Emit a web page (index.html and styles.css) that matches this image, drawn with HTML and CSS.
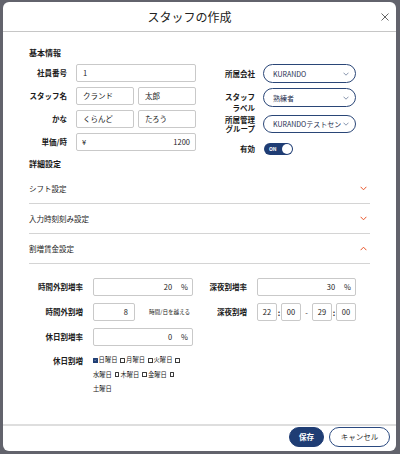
FILE: index.html
```html
<!DOCTYPE html>
<html lang="ja">
<head>
<meta charset="utf-8">
<title>スタッフの作成</title>
<link rel="stylesheet" href="styles.css">
</head>
<body>
<div class="modal">
  <header class="modal-header">
    <h1 class="modal-title">スタッフの作成</h1>
    <button class="close" aria-label="close"><svg width="8" height="8" viewBox="0 0 8 8"><path d="M0.5 0.5L7.5 7.5M7.5 0.5L0.5 7.5" stroke="#555" stroke-width="0.9" fill="none"/></svg></button>
  </header>
  <main class="modal-body">
    <h2 class="section-title first">基本情報</h2>
    <div class="basic">
      <div class="basic-left">
        <div class="lbl">社員番号</div>
        <div class="field"><div class="inp">1</div></div>
        <div class="lbl">スタッフ名</div>
        <div class="field pair"><div class="inp">クランド</div><div class="inp">太郎</div></div>
        <div class="lbl">かな</div>
        <div class="field pair"><div class="inp">くらんど</div><div class="inp">たろう</div></div>
        <div class="lbl">単価/時</div>
        <div class="field"><div class="inp money"><span>¥</span><span>1200</span></div></div>
      </div>
      <div class="basic-right">
        <div class="rrow r1">
          <div class="rlbl">所属会社</div>
          <div class="select"><span class="sel-text">KURANDO</span><svg class="sel-chev" width="6" height="4" viewBox="0 0 6 4"><path d="M0.5 0.7L3 3.2L5.5 0.7" stroke="#6a7a98" stroke-width="0.8" fill="none"/></svg></div>
        </div>
        <div class="rrow r2">
          <div class="rlbl two">スタッフ<br>ラベル</div>
          <div class="select"><span class="sel-text">熟練者</span><svg class="sel-chev" width="6" height="4" viewBox="0 0 6 4"><path d="M0.5 0.7L3 3.2L5.5 0.7" stroke="#6a7a98" stroke-width="0.8" fill="none"/></svg></div>
        </div>
        <div class="rrow r3">
          <div class="rlbl tight">所属管理<br>グループ</div>
          <div class="select"><span class="sel-text">KURANDOテストセンター</span><svg class="sel-chev" width="6" height="4" viewBox="0 0 6 4"><path d="M0.5 0.7L3 3.2L5.5 0.7" stroke="#6a7a98" stroke-width="0.8" fill="none"/></svg></div>
        </div>
        <div class="rrow r4">
          <div class="rlbl">有効</div>
          <div class="toggle"><span class="toggle-text">ON</span><span class="knob"></span></div>
        </div>
      </div>
    </div>

    <h2 class="section-title detail">詳細設定</h2>
    <div class="acc first-acc"><span>シフト設定</span><svg width="7" height="5" viewBox="0 0 7 5"><path d="M0.6 0.8L3.5 3.8L6.4 0.8" stroke="#e8552a" stroke-width="1" fill="none"/></svg></div>
    <div class="acc"><span>入力時刻刻み設定</span><svg width="7" height="5" viewBox="0 0 7 5"><path d="M0.6 0.8L3.5 3.8L6.4 0.8" stroke="#e8552a" stroke-width="1" fill="none"/></svg></div>
    <div class="acc"><span>割増賃金設定</span><svg width="7" height="5" viewBox="0 0 7 5"><path d="M0.6 4.2L3.5 1.2L6.4 4.2" stroke="#e8552a" stroke-width="1" fill="none"/></svg></div>

    <div class="premium">
      <div class="prem-left">
        <div class="plbl">時間外割増率</div>
        <div class="inp unit"><span>20</span><span class="pct">%</span></div>
        <div class="plbl">時間外割増</div>
        <div class="hours"><div class="inp short">8</div><span class="note">時間/日を越える</span></div>
        <div class="plbl">休日割増率</div>
        <div class="inp unit"><span>0</span><span class="pct">%</span></div>
        <div class="plbl top">休日割増</div>
        <div class="days">
          <div class="day-line"><span class="cb checked"><svg width="5" height="5" viewBox="0 0 5 5"><path d="M1 2.6L2.1 3.6L4 1.2" stroke="#fff" stroke-width="0.8" fill="none"/></svg></span><span class="dname">日曜日</span><span class="cb"></span><span class="dname">月曜日</span><span class="cb"></span><span class="dname">火曜日</span><span class="cb"></span></div>
          <div class="day-line"><span class="dname">水曜日</span><span class="cb"></span><span class="dname">木曜日</span><span class="cb"></span><span class="dname">金曜日</span><span class="cb"></span></div>
          <div class="day-line"><span class="dname">土曜日</span></div>
        </div>
      </div>
      <div class="prem-right">
        <div class="plbl">深夜割増率</div>
        <div class="inp unit"><span>30</span><span class="pct">%</span></div>
        <div class="plbl">深夜割増</div>
        <div class="times">
          <div class="inp tbox">22</div><span class="tsep">:</span><div class="inp tbox">00</div><span class="tdash">-</span><div class="inp tbox">29</div><span class="tsep">:</span><div class="inp tbox">00</div>
        </div>
      </div>
    </div>
  </main>
  <footer class="modal-footer">
    <button class="btn primary">保存</button>
    <button class="btn outline">キャンセル</button>
  </footer>
</div>
</body>
</html>
```

FILE: styles.css
```css
* { box-sizing: border-box; }

body {
  margin: 0;
  background: #62636c;
  font-family: "Noto Sans CJK JP", "Noto Sans", sans-serif;
  color: #1e1e1e;
}

.modal {
  margin: 2px 0 0 3px;
  width: 393px;
  height: 449px;
  background: #fff;
  border-radius: 6px;
  display: flex;
  flex-direction: column;
  overflow: hidden;
}

.modal-header {
  height: 30px;
  border-bottom: 1px solid #c6c6c6;
  display: flex;
  align-items: center;
  flex-shrink: 0;
}

.modal-title {
  flex: 1;
  margin: 0;
  text-align: center;
  font-size: 12px;
  font-weight: 400;
  line-height: 16px;
  color: #222;
}

.close {
  width: 17px;
  height: 17px;
  margin-right: 3px;
  padding: 0;
  border: 0;
  background: none;
  display: flex;
  align-items: center;
  justify-content: center;
}

.modal-body {
  flex: 1;
  padding: 0 26px;
}

.section-title {
  margin: 0;
  font-size: 8px;
  font-weight: 700;
  line-height: 12px;
  color: #1a1a1a;
}
.section-title.first { margin-top: 15px; }
.section-title.detail { margin-top: 3px; }

.basic {
  display: flex;
  margin-top: 5px;
  margin-left: -2px;
}

.basic-left {
  display: grid;
  grid-template-columns: 40px 120px;
  grid-auto-rows: 18px;
  column-gap: 9px;
  row-gap: 5px;
}

.lbl {
  font-size: 7.5px;
  font-weight: 700;
  text-align: right;
  line-height: 18px;
  white-space: nowrap;
  color: #1a1a1a;
}

.field { display: flex; }
.field.pair { gap: 4px; }
.field .inp { flex: 1; }

.inp {
  height: 18px;
  border: 1px solid #c9c9c9;
  border-radius: 2px;
  padding: 0 6px;
  font-size: 7.5px;
  line-height: 16px;
  color: #222;
  background: #fff;
}
.inp.money {
  display: flex;
  justify-content: space-between;
  padding: 0 5px 0 5px;
}

.basic-right {
  margin-left: 29px;
  display: flex;
  flex-direction: column;
}

.rrow {
  display: flex;
  align-items: center;
  gap: 8px;
}
.rrow.r1 { height: 19px; }
.rrow.r2 { margin-top: 5px; align-items: flex-start; height: 25px; }
.rrow.r3 { margin-top: 2px; height: 18px; }
.rrow.r4 { margin-top: 10px; height: 12px; }

.rlbl {
  width: 30px;
  text-align: right;
  font-size: 7.5px;
  font-weight: 700;
  white-space: nowrap;
  line-height: 12px;
  color: #1a1a1a;
}
.rlbl.two { line-height: 11px; padding-top: 3px; }
.rlbl.tight { line-height: 9.5px; }

.select {
  width: 93px;
  height: 19px;
  border: 1px solid #2a4677;
  border-radius: 10px;
  display: flex;
  align-items: center;
  padding: 0 6px 0 9px;
  gap: 2px;
}
.rrow.r3 .select { height: 18px; }
.sel-text {
  flex: 1;
  font-size: 7px;
  white-space: nowrap;
  overflow: hidden;
  color: #1f2f4f;
}
.sel-chev { flex-shrink: 0; }

.toggle {
  width: 29px;
  height: 12px;
  margin-left: 1px;
  border-radius: 6px;
  background: #1f3d74;
  display: flex;
  align-items: center;
  justify-content: space-between;
  padding: 0 1px 0 5px;
}
.toggle-text {
  font-size: 5px;
  font-weight: 700;
  color: #fff;
  line-height: 6px;
}
.knob {
  width: 10px;
  height: 10px;
  border-radius: 50%;
  background: #fff;
}

.acc {
  height: 30px;
  border-bottom: 1px solid #d4d4d4;
  display: flex;
  align-items: center;
  justify-content: space-between;
  padding-right: 3px;
  font-size: 7.5px;
  color: #1e1e1e;
}
.acc.first-acc { margin-top: 4px; }

.premium {
  display: flex;
  margin-top: 14px;
}

.prem-left {
  display: grid;
  grid-template-columns: 54px 100px;
  grid-template-rows: 18px 18px 18px auto;
  column-gap: 10px;
  row-gap: 7px;
}

.prem-right {
  margin-left: 14px;
  display: grid;
  grid-template-columns: 40px 99px;
  grid-template-rows: 18px 18px;
  column-gap: 10px;
  row-gap: 7px;
}

.plbl {
  font-size: 7.5px;
  font-weight: 700;
  text-align: right;
  white-space: nowrap;
  line-height: 18px;
  color: #1a1a1a;
}
.plbl.top { line-height: 14.5px; padding-top: 1px; }

.inp.unit {
  display: flex;
  justify-content: flex-end;
  padding-right: 4px;
}
.pct { margin-left: 9px; }

.hours {
  display: flex;
  align-items: center;
  gap: 14px;
}
.inp.short {
  width: 42px;
  text-align: right;
  padding-right: 6px;
}
.note {
  font-size: 5.6px;
  white-space: nowrap;
  color: #222;
}

.days {
  grid-column: 2 / span 1;
  font-size: 6.3px;
  line-height: 14.5px;
  white-space: nowrap;
  color: #222;
}
.day-line {
  display: flex;
  align-items: center;
  height: 14.5px;
}
.cb {
  width: 4.6px;
  height: 4.6px;
  border: 0.8px solid #3a3a3a;
  border-radius: 0.5px;
  margin-right: 1px;
  display: inline-flex;
  align-items: center;
  justify-content: center;
  flex-shrink: 0;
}
.cb.checked {
  background: #1f3d74;
  border-color: #1f3d74;
}
.cb svg { width: 4.6px; height: 4.6px; }
.dname { margin-right: 3px; }

.times {
  display: flex;
  align-items: center;
}
.inp.tbox {
  width: 20px;
  padding: 0;
  text-align: center;
}
.tsep {
  width: 4px;
  text-align: center;
  font-size: 7.5px;
  font-weight: 700;
}
.tdash {
  width: 11px;
  text-align: center;
  font-size: 7.5px;
}

.modal-footer {
  height: 27px;
  border-top: 2px solid #dedede;
  display: flex;
  justify-content: flex-end;
  align-items: flex-start;
  gap: 5px;
  padding: 1px 6px 0 0;
  flex-shrink: 0;
}

.btn {
  height: 20px;
  border-radius: 10px;
  font-family: inherit;
  font-size: 7.5px;
  padding: 0;
  line-height: 18px;
}
.btn.primary {
  width: 35px;
  background: #1f3d74;
  border: 1px solid #1f3d74;
  color: #fff;
  font-weight: 700;
}
.btn.outline {
  width: 61px;
  background: #fff;
  border: 1px solid #2b4a80;
  color: #333;
}
```
